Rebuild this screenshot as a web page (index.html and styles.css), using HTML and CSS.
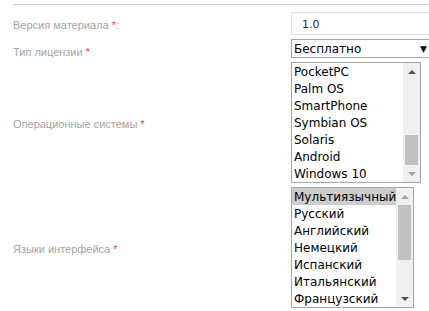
FILE: index.html
```html
<!DOCTYPE html>
<html>
<head>
<meta charset="utf-8">
<link rel="stylesheet" href="styles.css">
</head>
<body>
<div class="form">
  <div class="row row-version">
    <div class="label">Версия материала <span class="req">*</span>:</div>
    <div class="field"><div class="input">1.0</div></div>
  </div>
  <div class="row row-license">
    <div class="label">Тип лицензии <span class="req">*</span></div>
    <div class="field"><div class="select"><span>Бесплатно</span><span class="caret">▼</span></div></div>
  </div>
  <div class="row">
    <div class="label">Операционные системы <span class="req">*</span></div>
    <div class="field">
      <div class="listbox lb-os">
        <ul class="options">
          <li>PocketPC</li>
          <li>Palm OS</li>
          <li>SmartPhone</li>
          <li>Symbian OS</li>
          <li>Solaris</li>
          <li>Android</li>
          <li>Windows 10</li>
        </ul>
        <div class="sbar">
          <div class="arr up dark"></div>
          <div class="track track-os"><div class="thumb thumb-os"></div></div>
          <div class="arr down light"></div>
        </div>
      </div>
    </div>
  </div>
  <div class="row">
    <div class="label">Языки интерфейса <span class="req">*</span></div>
    <div class="field">
      <div class="listbox lb-lang">
        <ul class="options">
          <li class="sel">Мультиязычный</li>
          <li>Русский</li>
          <li>Английский</li>
          <li>Немецкий</li>
          <li>Испанский</li>
          <li>Итальянский</li>
          <li>Французский</li>
        </ul>
        <div class="sbar">
          <div class="arr up light"></div>
          <div class="track track-lang"><div class="thumb thumb-lang"></div></div>
          <div class="arr down dark"></div>
        </div>
      </div>
    </div>
  </div>
</div>
</body>
</html>
```
FILE: styles.css
```css
html, body {
  margin: 0;
  padding: 0;
  background: #fff;
}
body {
  font-family: "DejaVu Sans", Tahoma, sans-serif;
  overflow: hidden;
}
.form {
  margin-left: 13px;
  margin-top: 4px;
  border-top: 1px solid #cfcfcf;
  padding-top: 7px;
  display: flex;
  flex-direction: column;
  gap: 4px;
}
.row {
  display: grid;
  grid-template-columns: 278px 1fr;
  align-items: center;
}
.label {
  font-family: "Liberation Sans", Arial, sans-serif;
  font-size: 11px;
  color: #a3a3a3;
  padding-top: 3px;
}
.req {
  color: #ef3b3b;
}
.row-license .label { padding-top: 6px; }
.input {
  height: 21px;
  border: 1px solid #e3e3e3;
  border-right: none;
  box-sizing: content-box;
  font-size: 11px;
  color: #1f2a44;
  line-height: 23px;
  padding-left: 10px;
}
.select {
  border: 1px solid #a6a6a6;
  border-right: none;
  display: flex;
  justify-content: space-between;
  align-items: center;
  font-size: 12px;
  color: #000;
  padding-left: 2px;
  padding-top: 1px;
  box-sizing: content-box;
  height: 16px;
}
.caret {
  font-size: 9px;
  padding-right: 2px;
  color: #000;
}
.listbox {
  display: flex;
  border: 1px solid #a6a6a6;
  height: 119px;
}
.lb-os { width: 128px; }
.lb-lang { width: 121px; }
.options {
  list-style: none;
  margin: 0;
  padding: 0;
  flex: 1;
  font-size: 12px;
  color: #000;
}
.options li {
  height: 16px;
  line-height: 16px;
  padding-top: 1px;
  padding-left: 2px;
  white-space: nowrap;
}
.options li.sel {
  background: #cdcdcd;
}
.sbar {
  width: 17px;
  background: #f0f0f0;
  display: flex;
  flex-direction: column;
}
.arr {
  height: 17px;
  display: flex;
  align-items: center;
  justify-content: center;
}
.arr::before {
  content: "";
  width: 0;
  height: 0;
  border-left: 4px solid transparent;
  border-right: 4px solid transparent;
}
.arr.up::before { border-bottom: 4px solid currentColor; }
.arr.down::before { border-top: 4px solid currentColor; }
.arr.dark { color: #505050; }
.arr.light { color: #a3a3a3; }
.track {
  flex: 1;
  display: flex;
  flex-direction: column;
  padding: 0 2px;
}
.thumb {
  background: #c1c1c1;
}
.track-os { justify-content: flex-end; }
.thumb-os { height: 30px; }
.thumb-lang { height: 55px; }
```
